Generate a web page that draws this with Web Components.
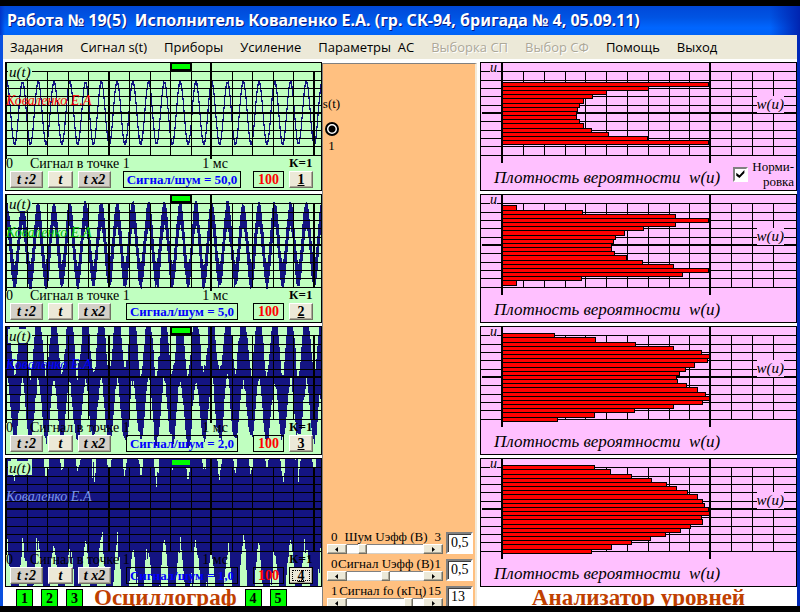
<!DOCTYPE html>
<html lang="ru">
<head>
<meta charset="utf-8">
<title>Работа № 19(5)</title>
<style>
  html, body { margin: 0; height: 100%; background: #000; }
  body { font-family: "Liberation Serif", serif; color: #000; overflow: hidden; }
</style>
</head>
<body>
<app-window>
  <span slot="title">Работа № 19(5)&nbsp; Исполнитель Коваленко Е.А. (гр. СК-94, бригада № 4, 05.09.11)</span>
  <menu-bar slot="menu"></menu-bar>
  <scope-panel slot="left" channel="1" noise="1" ratio="50,0" ink="#ff0000"></scope-panel>
  <scope-panel slot="left" channel="2" noise="11" ratio="5,0" ink="#00c000"></scope-panel>
  <scope-panel slot="left" channel="3" noise="31" ratio="2,0" ink="#0000ff"></scope-panel>
  <scope-panel slot="left" channel="4" noise="63" ratio="1,0" ink="#7c96e8" focused></scope-panel>
  <scope-footer slot="left"></scope-footer>
  <control-column slot="middle">
    <level-slider name="Шум Uэфф (В)" min="0" max="3" value="0.5"></level-slider>
    <level-slider name="Сигнал Uэфф (В)" min="0" max="1" value="0.5"></level-slider>
    <level-slider name="Сигнал fо (кГц)" min="1" max="15" value="13"></level-slider>
  </control-column>
  <level-panel slot="right" first="3" normal bars="229 169 127 113 104 100 98 97 97 100 104 112 129 168 229"></level-panel>
  <level-panel slot="right" first="1" bars="37 103 196 229 196 164 145 136 134 132 132 135 147 163 194 229 203 102 37"></level-panel>
  <level-panel slot="right" first="0" bars="75 116 156 194 222 230 228 215 206 200 197 198 207 218 226 230 223 194 155 115 78"></level-panel>
  <level-panel slot="right" first="0" bars="115 131 152 172 187 197 208 218 223 225 229 230 222 223 211 201 186 171 152 132 112"></level-panel>
  <section-title slot="right">Анализатор уровней</section-title>
</app-window>

<script>
const GRID_Y = [9, 18, 26, 34, 43, 59, 68, 76, 84, 93];

function define(name, html, setup) {
  customElements.define(name, class extends HTMLElement {
    connectedCallback() {
      if (this.shadowRoot) return;
      const root = this.attachShadow({ mode: 'open' });
      root.innerHTML = typeof html === 'function' ? html(this) : html;
      if (setup) setup(this, root);
    }
  });
}

const BEVEL = `border: 1px solid; border-color: #fff #716f64 #716f64 #fff;
  box-shadow: inset -1px -1px 0 #aca899;`;

define('app-window', `
<style>
  :host { display: flex; flex-direction: column; height: 100vh; box-sizing: border-box;
    padding: 6px 0; background: #000; }
  .bar { flex: none; height: 29px; padding: 0 7px; overflow: hidden;
    white-space: pre; color: #fff; text-shadow: 1px 1px 0 #0a1883;
    font: bold 16px/28px "Noto Sans", sans-serif;
    background: linear-gradient(90deg, #0033c8 0, transparent 5px),
      linear-gradient(270deg, #0024b0 0, transparent 30px),
      linear-gradient(#0048d8, #0054e3 40%, #0066ff 75%, #0062f6); }
  .frame { flex: 1; min-height: 0; display: flex; flex-direction: column; background: #fff;
    border: solid #0a50e0; border-width: 0 3px; border-right-color: #0028b8; overflow: hidden; }
  main { flex: 1; min-height: 0; display: grid; padding: 3px 0 0 2px;
    grid-template-columns: minmax(0, 1fr) 158px minmax(0, 1fr); }
  .col { display: flex; flex-direction: column; gap: 3px; min-height: 0; }
  .mid { display: flex; min-height: 0; }
</style>
<header class="bar"><slot name="title"></slot></header>
<div class="frame">
  <slot name="menu"></slot>
  <main>
    <div class="col"><slot name="left"></slot></div>
    <div class="mid"><slot name="middle"></slot></div>
    <div class="col"><slot name="right"></slot></div>
  </main>
</div>`);

define('menu-bar', `
<style>
  :host { display: block; flex: none; background: #ece9d8; }
  nav { display: flex; gap: 17px; height: 24px; padding-left: 7px; align-items: center; }
  button { all: unset; white-space: pre; font: 13px/24px "Open Sans", sans-serif; color: #000; }
  button:disabled { color: #aca899; text-shadow: 1px 1px 0 #fff; }
</style>
<nav>
  <button>Задания</button><button>Сигнал s(t)</button><button>Приборы</button>
  <button>Усиление</button><button>Параметры  АС</button><button disabled>Выборка СП</button>
  <button disabled>Выбор СФ</button><button>Помощь</button><button>Выход</button>
</nav>`);

/* Noisy sine drawn as one vertical stroke per pixel column. */
function wavePath(noise, seed) {
  const mid = 51, amp = 31, peak = 17, period = 15.77;
  const random = () => (seed = (seed * 16807) % 2147483647) / 2147483647;
  const s = x => mid - amp * Math.cos((x - peak) / period * 2 * Math.PI);
  const spread = () => {
    const r = (random() + random() + random()) / 3;
    return noise * (0.7 + 0.65 * r) + (random() > 0.96 ? noise * 0.2 : 0);
  };
  let d = '', up = spread(), down = spread();
  for (let x = 1; x < 316; x++) {
    if (random() > 0.4) up = spread();
    if (random() > 0.4) down = spread();
    const a = s(x - 0.5), b = s(x + 0.5);
    const top = Math.max(1, Math.round(Math.min(a, b) - up));
    const bottom = Math.min(128, Math.round(Math.max(a, b) + down));
    d += `M${x} ${top}h1V${bottom}h-1z`;
  }
  return d;
}

define('scope-panel', el => {
  const n = +el.getAttribute('channel');
  const noise = +el.getAttribute('noise');
  const V = [22, 42, 63, 83, 124, 145, 165, 186, 227, 247, 268, 288];
  const frame = n === 4 ? '#141482' : '#000';
  return `
<style>
  :host { display: grid; flex: 1 0 129px; position: relative; background: #c0ffc0; }
  svg.plot { grid-area: 1/1; width: 100%; height: 100%; min-width: 0; display: block; }
  .over { grid-area: 1/1; display: flex; flex-direction: column; justify-content: flex-end;
    padding: 0 9px 3px 0; min-width: 0; z-index: 1; }
  .u { position: absolute; left: 3px; top: 3px; padding: 0 1px; font: italic 15px/14px "Liberation Serif", serif;
    background: #c0ffc0; z-index: 1; }
  .name { position: absolute; left: 1px; top: 31px; font: italic 14px/16px "Liberation Serif", serif;
    color: ${el.getAttribute('ink')}; z-index: 1; white-space: nowrap; }
  .axis { display: grid; grid-template-columns: 24fr 173fr 87fr 24fr; padding-left: 1px;
    font-size: 14px; line-height: 15px; white-space: nowrap; }
  .axis b { font-size: 13px; line-height: 14px; }
  .row { display: flex; gap: 5px; height: 17px; padding-left: 5px; }
  button { padding: 0; box-sizing: border-box; font: italic bold 14px/14px "Liberation Serif", serif;
    background: #d4d0c8; color: #000; ${BEVEL} white-space: pre; }
  .wide { width: 33px; } .one { width: 25px; background: #ece9d8; }
  .num { width: 24px; font-style: normal; background: #ece9d8; }
  :host([focused]) .num { border-color: #000; outline: 1px dotted #000; outline-offset: -4px; }
  .mid { flex: 1; display: flex; justify-content: center; }
  .box { box-sizing: border-box; border: 1px solid #000; padding: 0 3px; font-weight: bold; font-size: 13px;
    line-height: 16px; color: #00f; white-space: nowrap; }
  .gain { color: #f00; width: 31px; text-align: center; font-size: 14px; }
</style>
<svg class="plot" viewBox="0 0 317 129" preserveAspectRatio="none" shape-rendering="crispEdges" aria-hidden="true">
  <path d="${wavePath(noise, 4211 * n + 17)}" fill="#141482"/>
  <path d="${GRID_Y.map(y => `M1 ${y}h315v1h-315z`).join('')}${V.map(x => `M${x} 9h1v84h-1z`).join('')}M1 50h315v2h-315zM1 0h1v97h-1zM103 9h2v84h-2zM205 0h2v97h-2zM308 9h2v84h-2z"/>
  <path d="M0 0h317v129h-317zM1 1v127h315v-127z" fill-rule="evenodd"/>
  <rect x="165" y="1" width="22" height="8" fill="${frame}"/>
  <rect x="167" y="2" width="18" height="5" fill="#0f0"/>
</svg>
<span class="u">u(t)</span><span class="name">Коваленко Е.А</span>
<div class="over">
  <div class="axis"><span>0</span><span>Сигнал в точке 1</span><span>1 мс</span><b>К=1</b></div>
  <div class="row">
    <button class="wide">t :2</button><button class="one">t</button><button class="wide">t x2</button>
    <span class="mid"><span class="box">Сигнал/шум = ${el.getAttribute('ratio')}</span></span>
    <span class="box gain">100</span><button class="num"><u>${n}</u></button>
  </div>
</div>`;
});

define('section-title', `
<style>
  :host { display: block; flex: none; height: 19px; margin-top: -2px; text-align: center; color: #c04000;
    font: bold 23px/19px "Liberation Serif", serif; white-space: nowrap; }
</style><slot></slot>`);

define('scope-footer', `
<style>
  :host { display: flex; flex: none; gap: 8px; height: 19px; margin-top: -2px; padding-left: 11px; align-items: flex-start; }
  button { box-sizing: border-box; width: 17px; height: 18px; margin-top: 1px; padding: 0; border: 1px solid #000;
    border-radius: 0; background: #0f0; color: #000; font: bold 14px/15px "Liberation Serif", serif; }
  section-title { margin: 0 0 0 3px; }
</style>
<button>1</button><button>2</button><button>3</button>
<section-title>Осциллограф</section-title>
<button>4</button><button>5</button>`);

define('control-column', `
<style>
  :host { display: flex; flex-direction: column; flex: 1; box-sizing: border-box; margin: 1px 3px 0 0; min-height: 0;
    background: #ffc080; border: solid #808080; border-width: 1px 2px 0 1px; border-right-color: #f4ead8; overflow: hidden; }
  label { display: flex; flex-direction: column; align-items: center; width: 17px; margin-top: 33px;
    font-size: 13px; line-height: 14px; }
  input { appearance: none; width: 14px; height: 14px; margin: 11px 0 3px; border: 2px solid #000; border-radius: 50%;
    background: radial-gradient(circle, #000 0 3px, #fff 4px); }
  .group { display: flex; flex-direction: column; gap: 2px; margin: auto 0 -2px; padding-left: 4px; }
</style>
<label>s(t)<input type="radio" name="src" checked>1</label>
<div class="group"><slot></slot></div>`);

define('level-slider', el => {
  const g = k => el.getAttribute(k);
  return `
<style>
  :host { display: flex; gap: 3px; align-items: flex-end; }
  .part { width: 116px; }
  label { display: flex; justify-content: space-between; padding: 0 2px 0 4px; font-size: 13px; line-height: 15px; white-space: nowrap; }
  .track { display: flex; height: 10px; }
  button { flex: none; width: 20px; padding: 0; box-sizing: border-box; background: #ece9d8; ${BEVEL}
    display: flex; align-items: center; justify-content: center; }
  input[type=range] { appearance: none; flex: 1; min-width: 0; margin: 0; height: 10px; background: #fff;
    box-shadow: inset 0 1px 0 #808080, inset 0 -1px 0 #d4d0c8; }
  input[type=range]::-webkit-slider-thumb { appearance: none; width: 9px; height: 10px; background: #ece9d8; box-sizing: border-box; ${BEVEL} }
  input[type=text] { box-sizing: border-box; width: 27px; height: 22px; padding: 0 0 0 3px; border: 2px solid;
    border-color: #808080 #fff #fff #808080; box-shadow: inset 1px 1px 0 #404040;
    background: #fff; font: 14px/18px "Liberation Serif", serif; color: #000; }
</style>
<div class="part">
  <label for="r"><span>${g('min')}</span><span>${g('name')}</span><span>${g('max')}</span></label>
  <div class="track">
    <button aria-label="Меньше"><svg width="4" height="5" viewBox="0 0 4 5"><path d="M0 2.5 3 0v5z"/></svg></button>
    <input id="r" type="range" min="${g('min')}" max="${g('max')}" step="0.1" value="${g('value')}">
    <button aria-label="Больше"><svg width="4" height="5" viewBox="0 0 4 5"><path d="M4 2.5 1 0v5z"/></svg></button>
  </div>
</div>
<input type="text" aria-label="${g('name')}" value="${g('value').replace('.', ',')}">`;
});

define('level-panel', el => {
  const edges = [7, 11, 16, 20, 24, 28, 32, 36, 41, 45, 49, 53, 57, 61, 66, 70, 74, 78, 82, 86, 91, 95];
  const first = +el.getAttribute('first');
  const ends = el.getAttribute('bars').split(' ').map(Number);
  const V = [43, 64, 85, 105, 126, 147, 168, 189, 209, 251, 272, 293];
  const bars = ends.map((e, i) => {
    const y = edges[first + i], h = edges[first + i + 1] - y;
    return `<path d="M22 ${y}H${e}v${h + 1}H22z"/><path fill="#f00" d="M22 ${y + 1}H${e - 1}v${h - 1}H22z"/>`;
  }).join('');
  return `
<style>
  :host { display: grid; flex: 1 0 129px; position: relative; background: #ffc0ff; }
  svg.plot { grid-area: 1/1; width: 100%; height: 100%; min-width: 0; display: block; }
  .over { grid-area: 1/1; display: flex; align-items: flex-end; justify-content: space-between; gap: 8px;
    min-width: 0; padding: 0 3px 2px 14px; z-index: 1; }
  .cap { font: italic 17px/23px "Liberation Serif", serif; white-space: pre; }
  .u, .w { position: absolute; z-index: 1; background: #ffc0ff; font: italic 15px/17px "Liberation Serif", serif; }
  .u { left: 10px; top: 1px; font-size: 14px; line-height: 9px; }
  .w { right: 13px; top: 34px; }
  label { display: flex; align-items: center; gap: 4px; font-size: 13px; line-height: 15px; text-align: right; }
  input { appearance: none; box-sizing: border-box; width: 15px; height: 15px; margin: 0; border: 2px solid;
    border-color: #808080 #fff #fff #808080; background: #fff; position: relative; }
  input::after { content: ""; display: block; width: 9px; height: 9px; margin: 1px; background: #000;
    clip-path: polygon(0 35%, 35% 65%, 90% 5%, 90% 40%, 35% 95%, 0 70%); }
</style>
<svg class="plot" viewBox="0 0 317 129" preserveAspectRatio="none" shape-rendering="crispEdges" aria-hidden="true">
  <path d="${GRID_Y.map(y => `M1 ${y}h315v1h-315z`).join('')}${V.map(x => `M${x} 9h1v84h-1z`).join('')}M2 50h314v2h-314z"/>
  <path d="M229 0h2v101h-2z"/>
  ${bars}
  <path d="M21 0h2v101h-2z"/>
  <path d="M0 0h317v129h-317zM1 1v127h315v-127z" fill-rule="evenodd"/>
</svg>
<span class="u">u</span><span class="w">w(u)</span>
<div class="over"><span class="cap">Плотность вероятности  w(u)</span>
${el.hasAttribute('normal') ? '<label><input type="checkbox" checked><span>Норми-<br>ровка</span></label>' : ''}</div>`;
});
</script>
</body>
</html>
